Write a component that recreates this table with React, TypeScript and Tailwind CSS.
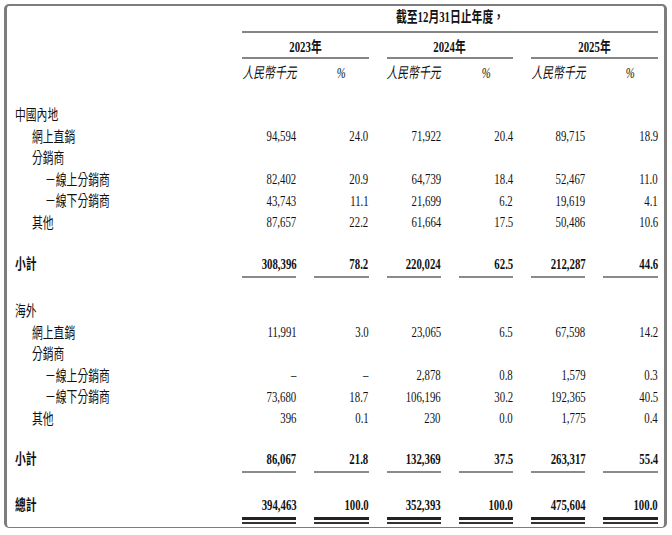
import React from 'react';

type Align = 'left' | 'right' | 'center';

const GRID = 'grid grid-cols-[209px_repeat(6,54.3px)] gap-x-[18px]';

// narrow typeset look: text is squeezed horizontally
const T = ({ children, align = 'right', className = '' }: { children: React.ReactNode; align?: Align; className?: string }) => {
  const origin = align === 'right' ? 'origin-right' : align === 'left' ? 'origin-left' : 'origin-center';
  return <span className={`inline-block whitespace-nowrap leading-none scale-x-[0.72] ${origin} ${className}`}>{children}</span>;
};

const indent = (level: number) => (level === 2 ? 'pl-[30px]' : level === 1 ? 'pl-[17px]' : '');

const Row = ({ label, level = 0, values = [] }: { label: string; level?: number; values?: string[] }) => (
  <div className={`${GRID} h-[21.5px] items-center`}>
    <div className={indent(level)}>
      <T align="left">{label}</T>
    </div>
    {values.map((v, i) => (
      <div key={i} className="flex justify-end">
        <T>{v}</T>
      </div>
    ))}
  </div>
);

const SubTotal = ({ label, values }: { label: string; values: string[] }) => (
  <div className={GRID}>
    <div className="h-[24px] flex items-center">
      <T align="left" className="font-bold">{label}</T>
    </div>
    {values.map((v, i) => (
      <div key={i} className="flex flex-col">
        <div className="h-[24px] flex items-center justify-end">
          <T className="font-bold">{v}</T>
        </div>
        <div className="h-[2px] bg-[#8a8a8a]" />
      </div>
    ))}
  </div>
);

const Total = ({ label, values }: { label: string; values: string[] }) => (
  <div className={GRID}>
    <div className="h-[24px] flex items-center">
      <T align="left" className="font-bold">{label}</T>
    </div>
    {values.map((v, i) => (
      <div key={i} className="flex flex-col">
        <div className="h-[24px] flex items-center justify-end">
          <T className="font-bold">{v}</T>
        </div>
        <div className="h-[3px] bg-[#222]" />
        <div className="h-[2px]" />
        <div className="h-[2px] bg-[#333]" />
      </div>
    ))}
  </div>
);

const years = ['2023年', '2024年', '2025年'];

export default function App() {
  return (
    <div className="h-[535px] bg-white pt-[4px] pl-[4px] pr-[5px] font-['Liberation_Serif','Noto_Sans_CJK_TC',serif] text-[15px] text-[#111]">
      <div className="h-[524px] box-border rounded-[5px] border-l-[3px] border-r-[3px] border-t-[2px] border-b border-[#7d7d7d] pl-[8px]">
        {/* header */}
        <div className={GRID}>
          <div className="col-start-2 col-span-6 h-[27px] pb-[5px] flex items-end justify-center border-b-2 border-[#858585]">
            <T align="center" className="font-bold mb-[1px]">截至12月31日止年度，</T>
          </div>
        </div>
        <div className={GRID}>
          <div />
          {years.map((y) => (
            <div key={y} className="col-span-2 h-[26px] pt-[5px] flex items-center justify-center border-b-2 border-[#858585]">
              <T align="center" className="font-bold">{y}</T>
            </div>
          ))}
        </div>
        <div className={`${GRID} h-[27px] pt-[1px] items-center`}>
          <div />
          {years.map((y) => (
            <React.Fragment key={y}>
              <div className="flex justify-center">
                <T align="center" className="italic">人民幣千元</T>
              </div>
              <div className="flex justify-center">
                <T align="center" className="italic">%</T>
              </div>
            </React.Fragment>
          ))}
        </div>

        <div className="h-[18px]" />
        <Row label="中國內地" />
        <Row label="網上直銷" level={1} values={['94,594', '24.0', '71,922', '20.4', '89,715', '18.9']} />
        <Row label="分銷商" level={1} />
        <Row label="－線上分銷商" level={2} values={['82,402', '20.9', '64,739', '18.4', '52,467', '11.0']} />
        <Row label="－線下分銷商" level={2} values={['43,743', '11.1', '21,699', '6.2', '19,619', '4.1']} />
        <Row label="其他" level={1} values={['87,657', '22.2', '61,664', '17.5', '50,486', '10.6']} />
        <div className="h-[19px]" />
        <SubTotal label="小計" values={['308,396', '78.2', '220,024', '62.5', '212,287', '44.6']} />

        <div className="h-[22px]" />
        <Row label="海外" />
        <Row label="網上直銷" level={1} values={['11,991', '3.0', '23,065', '6.5', '67,598', '14.2']} />
        <Row label="分銷商" level={1} />
        <Row label="－線上分銷商" level={2} values={['–', '–', '2,878', '0.8', '1,579', '0.3']} />
        <Row label="－線下分銷商" level={2} values={['73,680', '18.7', '106,196', '30.2', '192,365', '40.5']} />
        <Row label="其他" level={1} values={['396', '0.1', '230', '0.0', '1,775', '0.4']} />
        <div className="h-[18px]" />
        <SubTotal label="小計" values={['86,067', '21.8', '132,369', '37.5', '263,317', '55.4']} />

        <div className="h-[20px]" />
        <Total label="總計" values={['394,463', '100.0', '352,393', '100.0', '475,604', '100.0']} />
      </div>
    </div>
  );
}
